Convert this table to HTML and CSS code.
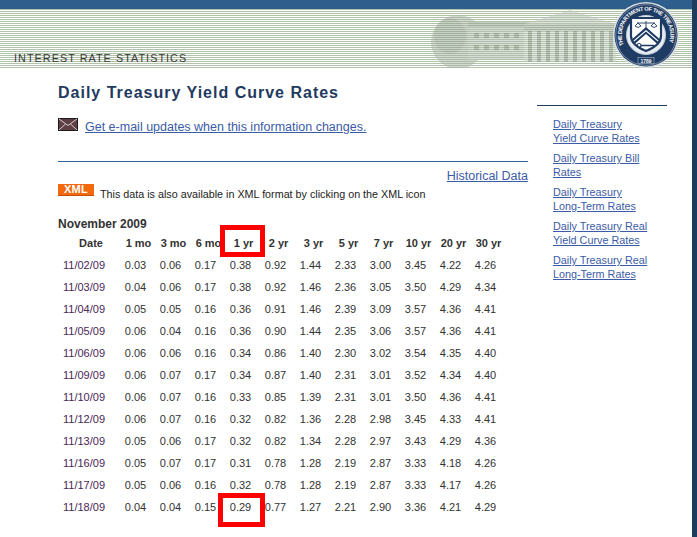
FILE: index.html
```html
<!DOCTYPE html>
<html>
<head>
<meta charset="utf-8">
<title>Daily Treasury Yield Curve Rates</title>
<link rel="stylesheet" href="styles.css">
</head>
<body>
<div class="page">
  <header class="banner">
    <span class="section">INTEREST RATE STATISTICS</span>
    <svg class="art" width="272" height="68" viewBox="0 0 272 68">
      <defs>
        <clipPath id="shieldclip"><path d="M-15,-17 L15,-17 L15,1 Q15,10 0,16 Q-15,10 -15,1 Z"/></clipPath>
        <path id="ringpath" d="M -22.1,10 A 24.3 24.3 0 1 1 22.1,10"/>
      </defs>
      <g opacity="0.5">
        <ellipse cx="38" cy="42" rx="27" ry="27" fill="#a9b4a6"/>
        <ellipse cx="30" cy="36" rx="16" ry="18" fill="#95a292"/>
        <rect x="48" y="26" width="62" height="34" fill="#b3bdb0"/>
        <rect x="48" y="22" width="62" height="5" fill="#94a191"/>
        <g fill="#7d8c7a">
          <rect x="54" y="33" width="5" height="5"/><rect x="64" y="33" width="5" height="5"/><rect x="74" y="33" width="5" height="5"/><rect x="84" y="33" width="5" height="5"/><rect x="94" y="33" width="5" height="5"/>
          <rect x="54" y="45" width="5" height="5"/><rect x="64" y="45" width="5" height="5"/><rect x="74" y="45" width="5" height="5"/><rect x="84" y="45" width="5" height="5"/><rect x="94" y="45" width="5" height="5"/>
        </g>
        <path d="M104,24 L150,10 L196,24 Z" fill="#bcc5b9"/>
        <rect x="104" y="24" width="92" height="7" fill="#9eaa9b"/>
        <rect x="104" y="31" width="92" height="31" fill="#c6cec3"/>
        <g fill="#7f8e7c">
          <rect x="108" y="31" width="4" height="31"/><rect x="117" y="31" width="4" height="31"/><rect x="126" y="31" width="4" height="31"/><rect x="135" y="31" width="4" height="31"/><rect x="144" y="31" width="4" height="31"/><rect x="153" y="31" width="4" height="31"/><rect x="162" y="31" width="4" height="31"/><rect x="171" y="31" width="4" height="31"/><rect x="180" y="31" width="4" height="31"/><rect x="189" y="31" width="4" height="31"/>
        </g>
      </g>
      <g transform="translate(226,35)">
        <circle r="33" fill="#d9e0e4"/>
        <circle r="31.5" fill="#1e3b63"/>
        <circle r="30.3" fill="none" stroke="#aebccb" stroke-width="0.6"/>
        <circle r="19.5" fill="#e6ecf1" stroke="#c0ccd7" stroke-width="1"/>
        <text class="ringtext"><textPath href="#ringpath" textLength="94" lengthAdjust="spacing">THE DEPARTMENT OF THE TREASURY</textPath></text>
        <rect x="-8" y="22.5" width="16" height="6" fill="none" stroke="#c6d0da" stroke-width="0.5"/>
        <text class="year" x="0" y="27.6" text-anchor="middle">1789</text>
        <path d="M-15,-17 L15,-17 L15,1 Q15,10 0,16 Q-15,10 -15,1 Z" fill="#fff"/>
        <g clip-path="url(#shieldclip)">
          <polygon points="-17,7 0,-8 17,7 17,14 0,-1 -17,14" fill="#1e3b63"/>
          <polygon points="-17,9.5 0,-5 17,9.5 17,11 0,-3.5 -17,11" fill="#fff"/>
          <line x1="-5" y1="10.5" x2="8" y2="10.5" stroke="#1e3b63" stroke-width="1.4"/>
          <circle cx="-7" cy="10.5" r="2" fill="none" stroke="#1e3b63" stroke-width="1.2"/>
        </g>
        <path d="M-15,-17 L15,-17 L15,1 Q15,10 0,16 Q-15,10 -15,1 Z" fill="none" stroke="#1e3b63" stroke-width="2.2"/>
        <g stroke="#1e3b63" stroke-width="0.9" fill="none">
          <line x1="0" y1="-14" x2="0" y2="-7"/>
          <line x1="-9" y1="-12" x2="9" y2="-12"/>
          <path d="M-11,-9 Q-8,-6 -5,-9"/>
          <path d="M5,-9 Q8,-6 11,-9"/>
          <line x1="-8" y1="-12" x2="-11" y2="-9"/><line x1="-8" y1="-12" x2="-5" y2="-9"/>
          <line x1="8" y1="-12" x2="5" y2="-9"/><line x1="8" y1="-12" x2="11" y2="-9"/>
        </g>
      </g>
    </svg>
  </header>

  <div class="layout">
    <main class="main">
      <h1 class="title">Daily Treasury Yield Curve Rates</h1>
      <div class="email-row">
        <svg class="envelope" width="20" height="13" viewBox="0 0 20 13">
          <rect x="0.5" y="0.5" width="19" height="12" fill="#5e3d44" stroke="#1b1b1b"/>
          <path d="M1,1 L10,7.5 L19,1 M1,12 L7.5,6 M19,12 L12.5,6" stroke="#d9cccc" stroke-width="1" fill="none"/>
        </svg>
        <a class="link" href="#">Get e-mail updates when this information changes.</a>
      </div>
      <div class="rule"></div>
      <div class="hist"><a class="link" href="#">Historical Data</a></div>
      <div class="xml-row">
        <span class="xml">XML</span>
        <span class="xml-note">This data is also available in XML format by clicking on the XML icon</span>
      </div>
      <div class="month">November 2009</div>
      <div class="table-wrap">
        <table class="rates">
          <colgroup>
            <col class="c-date"><col><col><col><col><col><col><col><col><col><col><col>
          </colgroup>
          <thead>
            <tr><th>Date</th><th>1 mo</th><th>3 mo</th><th>6 mo</th><th>1 yr</th><th>2 yr</th><th>3 yr</th><th>5 yr</th><th>7 yr</th><th>10 yr</th><th>20 yr</th><th>30 yr</th></tr>
          </thead>
          <tbody>
            <tr><td>11/02/09</td><td>0.03</td><td>0.06</td><td>0.17</td><td>0.38</td><td>0.92</td><td>1.44</td><td>2.33</td><td>3.00</td><td>3.45</td><td>4.22</td><td>4.26</td></tr>
            <tr><td>11/03/09</td><td>0.04</td><td>0.06</td><td>0.17</td><td>0.38</td><td>0.92</td><td>1.46</td><td>2.36</td><td>3.05</td><td>3.50</td><td>4.29</td><td>4.34</td></tr>
            <tr><td>11/04/09</td><td>0.05</td><td>0.05</td><td>0.16</td><td>0.36</td><td>0.91</td><td>1.46</td><td>2.39</td><td>3.09</td><td>3.57</td><td>4.36</td><td>4.41</td></tr>
            <tr><td>11/05/09</td><td>0.06</td><td>0.04</td><td>0.16</td><td>0.36</td><td>0.90</td><td>1.44</td><td>2.35</td><td>3.06</td><td>3.57</td><td>4.36</td><td>4.41</td></tr>
            <tr><td>11/06/09</td><td>0.06</td><td>0.06</td><td>0.16</td><td>0.34</td><td>0.86</td><td>1.40</td><td>2.30</td><td>3.02</td><td>3.54</td><td>4.35</td><td>4.40</td></tr>
            <tr><td>11/09/09</td><td>0.06</td><td>0.07</td><td>0.17</td><td>0.34</td><td>0.87</td><td>1.40</td><td>2.31</td><td>3.01</td><td>3.52</td><td>4.34</td><td>4.40</td></tr>
            <tr><td>11/10/09</td><td>0.06</td><td>0.07</td><td>0.16</td><td>0.33</td><td>0.85</td><td>1.39</td><td>2.31</td><td>3.01</td><td>3.50</td><td>4.36</td><td>4.41</td></tr>
            <tr><td>11/12/09</td><td>0.06</td><td>0.07</td><td>0.16</td><td>0.32</td><td>0.82</td><td>1.36</td><td>2.28</td><td>2.98</td><td>3.45</td><td>4.33</td><td>4.41</td></tr>
            <tr><td>11/13/09</td><td>0.05</td><td>0.06</td><td>0.17</td><td>0.32</td><td>0.82</td><td>1.34</td><td>2.28</td><td>2.97</td><td>3.43</td><td>4.29</td><td>4.36</td></tr>
            <tr><td>11/16/09</td><td>0.05</td><td>0.07</td><td>0.17</td><td>0.31</td><td>0.78</td><td>1.28</td><td>2.19</td><td>2.87</td><td>3.33</td><td>4.18</td><td>4.26</td></tr>
            <tr><td>11/17/09</td><td>0.05</td><td>0.06</td><td>0.16</td><td>0.32</td><td>0.78</td><td>1.28</td><td>2.19</td><td>2.87</td><td>3.33</td><td>4.17</td><td>4.26</td></tr>
            <tr><td>11/18/09</td><td>0.04</td><td>0.04</td><td>0.15</td><td>0.29</td><td>0.77</td><td>1.27</td><td>2.21</td><td>2.90</td><td>3.36</td><td>4.21</td><td>4.29</td></tr>
          </tbody>
        </table>
        <div class="mark mark-top"></div>
        <div class="mark mark-bottom"></div>
      </div>
    </main>

    <aside class="side">
      <div class="side-rule"></div>
      <ul class="side-links">
        <li><a class="link" href="#">Daily Treasury<br>Yield Curve Rates</a></li>
        <li><a class="link" href="#">Daily Treasury Bill<br>Rates</a></li>
        <li><a class="link" href="#">Daily Treasury<br>Long-Term Rates</a></li>
        <li><a class="link" href="#">Daily Treasury Real<br>Yield Curve Rates</a></li>
        <li><a class="link" href="#">Daily Treasury Real<br>Long-Term Rates</a></li>
      </ul>
    </aside>
  </div>
</div>
</body>
</html>
```

FILE: styles.css
```css
* { box-sizing: border-box; }

html, body {
  margin: 0;
  padding: 0;
  background: #fff;
}

body {
  font-family: "Liberation Sans", Arial, sans-serif;
  color: #333;
}

.page {
  width: 697px;
  min-height: 537px;
  border-right: 5px solid #1d3b5c;
  overflow: hidden;
}

.banner {
  height: 68px;
  display: flex;
  align-items: flex-end;
  justify-content: space-between;
  background:
    linear-gradient(#2e5e8b, #2e5e8b) 0 0 / 100% 9px no-repeat,
    repeating-linear-gradient(to bottom, #ffffff 0, #ffffff 1px, #b0c2a9 1px, #b0c2a9 2px);
}

.section {
  padding-left: 14px;
  padding-bottom: 4px;
  font-size: 10.8px;
  line-height: 12px;
  letter-spacing: 1.05px;
  color: #3a3a3a;
}

.art {
  display: block;
  flex: none;
}

.ringtext {
  font-family: "Liberation Sans", sans-serif;
  font-size: 5.6px;
  font-weight: bold;
  fill: #ffffff;
}

.year {
  font-size: 5px;
  fill: #ffffff;
  font-weight: bold;
}

.layout {
  display: flex;
}

.main {
  width: 528px;
  padding-left: 58px;
}

.title {
  margin: 15px 0 15px;
  font-size: 16px;
  line-height: 20px;
  font-weight: bold;
  letter-spacing: 1px;
  color: #1f3a5e;
}

.link {
  color: #3b5ba6;
  text-decoration: underline;
}

.email-row {
  display: flex;
  align-items: baseline;
  gap: 7px;
  font-size: 12.5px;
  line-height: 14px;
}

.envelope {
  display: block;
  flex: none;
}

.rule {
  margin-top: 27px;
  border-top: 1px solid #336699;
}

.hist {
  margin-top: 7px;
  text-align: right;
  font-size: 12.5px;
  line-height: 14px;
}

.xml-row {
  display: flex;
  align-items: flex-start;
  gap: 6px;
  margin-top: 1px;
}

.xml {
  display: block;
  width: 36px;
  height: 12px;
  background: #f2690e;
  border-bottom: 1px solid #c44d00;
  color: #fff;
  font-size: 11px;
  font-weight: bold;
  line-height: 11px;
  text-align: center;
  letter-spacing: 0.2px;
}

.xml-note {
  padding-top: 3px;
  font-size: 10.75px;
  line-height: 14px;
  color: #222;
}

.month {
  margin-top: 16px;
  font-size: 12px;
  line-height: 14px;
  font-weight: bold;
  color: #333;
}

.table-wrap {
  position: relative;
  margin-top: 1px;
}

.rates {
  border-collapse: collapse;
  table-layout: fixed;
  width: 445px;
}

.rates col { width: 35px; }
.rates col.c-date { width: 60px; }

.rates th,
.rates td {
  height: 22px;
  padding: 0;
  font-size: 11px;
  line-height: 14px;
  vertical-align: middle;
  white-space: nowrap;
}

.rates th {
  padding-left: 6px;
  text-align: center;
  font-weight: bold;
  color: #333;
}

.rates td {
  text-align: center;
  color: #333;
}

.rates td:first-child {
  text-align: left;
  padding-left: 5px;
  color: #4a2657;
}

.mark {
  position: absolute;
  border: 5px solid #ff0000;
}

.mark-top {
  left: 162px;
  top: -7px;
  width: 45px;
  height: 32px;
}

.mark-bottom {
  left: 160px;
  top: 261px;
  width: 47px;
  height: 34px;
}

.side {
  width: 130px;
  margin-left: 9px;
}

.side-rule {
  margin-top: 37px;
  border-top: 1px solid #1f3f5f;
}

.side-links {
  list-style: none;
  margin: 11px 0 0;
  padding: 0 0 0 16px;
  font-size: 10.8px;
  line-height: 14px;
}

.side-links li {
  margin-bottom: 6px;
}
```
